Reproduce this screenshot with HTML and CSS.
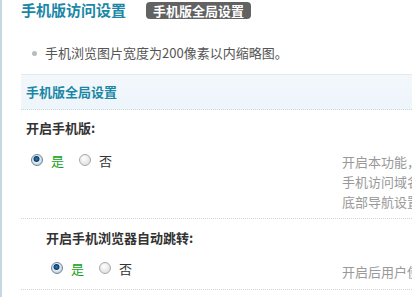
FILE: index.html
```html
<!DOCTYPE html>
<html lang="zh-CN">
<head>
    <meta charset="UTF-8">
    <title>手机版访问设置</title>
    <link rel="stylesheet" href="styles.css">
</head>
<body>
    <div class="main">
        <div class="title-bar">
            <h3 class="title">手机版访问设置</h3>
            <span class="tab">手机版全局设置</span>
        </div>
        <ul class="tips">
            <li>手机浏览图片宽度为200像素以内缩略图。</li>
        </ul>
        <div class="section">
            <div class="section-head">手机版全局设置</div>
            <div class="row">
                <div class="row-label">开启手机版:</div>
                <div class="row-body">
                    <div class="radios">
                        <label class="radio checked"><span class="dot"></span><span class="yes">是</span></label>
                        <label class="radio"><span class="dot"></span><span>否</span></label>
                    </div>
                    <div class="tip">开启本功能，<br>手机访问域名<br>底部导航设置</div>
                </div>
            </div>
            <div class="row sub">
                <div class="row-label">开启手机浏览器自动跳转:</div>
                <div class="row-body">
                    <div class="radios">
                        <label class="radio checked"><span class="dot"></span><span class="yes">是</span></label>
                        <label class="radio"><span class="dot"></span><span>否</span></label>
                    </div>
                    <div class="tip">开启后用户使</div>
                </div>
            </div>
        </div>
    </div>
</body>
</html>
```

FILE: styles.css
```css
body {
    margin: 0;
    font-family: "Noto Sans CJK SC", "DejaVu Sans", sans-serif;
    font-size: 13px;
    color: #333;
    background: #fff;
    overflow: hidden;
}
.main {
    border-left: 2px solid #c6d9e1;
    padding-left: 19px;
    min-height: 297px;
    width: 391px;
    overflow: hidden;
}
.title-bar {
    display: flex;
    align-items: center;
    height: 20px;
}
.title {
    margin: 0;
    font-size: 15px;
    font-weight: bold;
    color: #1b87a6;
    line-height: 20px;
}
.tab {
    margin-left: 20px;
    background: #626262;
    color: #fff;
    font-weight: bold;
    border-radius: 4px;
    padding: 0 7px;
    line-height: 17px;
    height: 17px;
}
.tips {
    margin: 23px 0 0;
    padding: 0 0 0 11px;
    list-style: none;
    color: #555;
}
.tips li {
    line-height: 20px;
    position: relative;
    padding-left: 13px;
}
.tips li::before {
    content: "";
    position: absolute;
    left: 0;
    top: 8px;
    width: 5px;
    height: 5px;
    border-radius: 50%;
    background: #bbb;
}
.section {
    margin-top: 11px;
}
.section-head {
    height: 34px;
    line-height: 34px;
    border-top: 1px solid #e3ebf0;
    border-bottom: 1px dotted #c9d6de;
    background: linear-gradient(#f2f7fb, #eef5fb);
    padding-left: 5px;
    font-weight: bold;
    color: #1b87a6;
}
.row {
    border-bottom: 1px dotted #d5d5d5;
    padding: 10px 0 0 5px;
    height: 98px;
}
.row.sub {
    padding: 11px 0 0 25px;
    height: 59px;
}
.row-label {
    font-weight: bold;
    line-height: 16px;
}
.row-body {
    display: flex;
    align-items: flex-start;
    margin-top: 14px;
}
.sub .row-body {
    margin-top: 12px;
}
.radios {
    display: flex;
    flex-shrink: 0;
    gap: 15px;
    width: 311px;
    height: 20px;
    padding-left: 5px;
    align-items: center;
}
.sub .radios {
    width: 291px;
}
.radio {
    display: flex;
    align-items: center;
    gap: 8px;
    color: #333;
}
.dot {
    width: 10px;
    height: 10px;
    border-radius: 50%;
    border: 1px solid #a9a9a9;
    background: radial-gradient(circle at 40% 35%, #fff, #d6d6d6);
}
.checked .dot {
    border-color: #6f8597;
    background: radial-gradient(circle at 45% 40%, #2d7fc0 0, #0d3f6e 2.5px, #e6eef4 3.5px, #c2cfd9 6px);
}
.yes {
    color: #11a111;
}
.tip {
    color: #999;
    line-height: 20px;
    white-space: nowrap;
    margin-top: 2px;
}
.sub .tip {
    margin-top: 4px;
}
```
